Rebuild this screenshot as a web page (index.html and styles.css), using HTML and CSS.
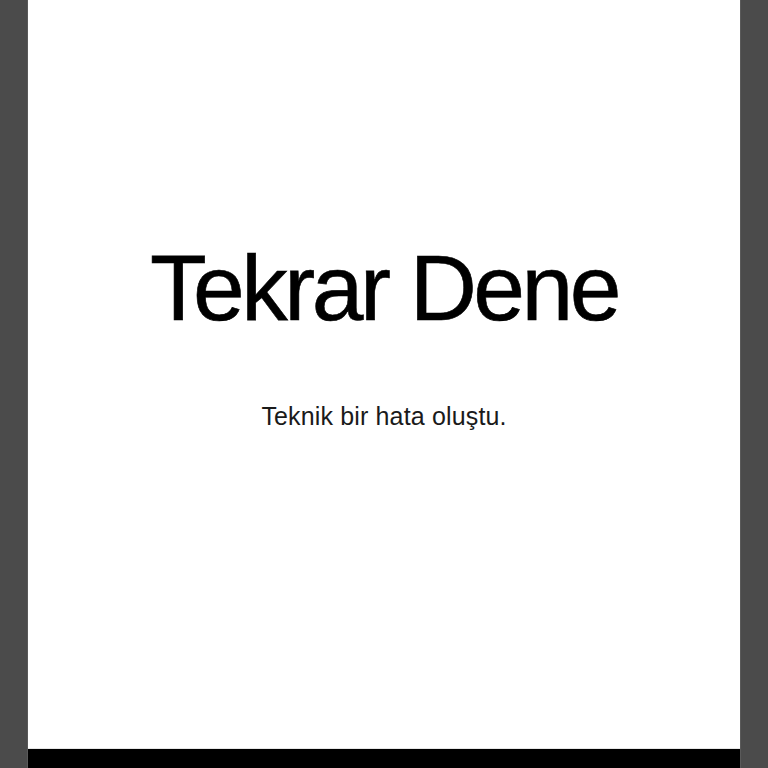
FILE: index.html
```html
<!DOCTYPE html>
<html lang="tr">
<head>
<meta charset="utf-8">
<link rel="stylesheet" href="styles.css">
</head>
<body>
<div class="frame">
  <div class="side side-left"></div>
  <div class="screen">
    <div class="content">
      <h1 class="title">Tekrar Dene</h1>
      <p class="message">Teknik bir hata oluştu.</p>
    </div>
    <div class="bottom-bar"></div>
  </div>
  <div class="side side-right"></div>
</div>
</body>
</html>
```
FILE: styles.css
```css
html, body {
  margin: 0;
  padding: 0;
  height: 100%;
}
body {
  font-family: "Liberation Sans", Arial, sans-serif;
  background: #4b4b4b;
}
.frame {
  display: flex;
  height: 768px;
  width: 768px;
}
.side {
  width: 28px;
  background: #4b4b4b;
}
.side-left {
  box-shadow: inset -1px 0 0 #5a5a5a;
}
.side-right {
  box-shadow: inset 1px 0 0 #5a5a5a;
}
.screen {
  flex: 1;
  display: flex;
  flex-direction: column;
}
.content {
  flex: 1;
  background: #ffffff;
  display: flex;
  flex-direction: column;
  align-items: center;
  padding-top: 238px;
  border-bottom: 1px solid #e6e6e6;
}
.title {
  margin: 0;
  font-weight: 400;
  font-size: 93px;
  letter-spacing: -3.5px;
  line-height: 100px;
  color: #000;
  -webkit-text-stroke: 0.6px #000;
}
.message {
  margin: 63px 0 0;
  font-size: 25px;
  line-height: 30px;
  letter-spacing: 0.15px;
  color: #1a1a1a;
}
.bottom-bar {
  height: 19px;
  background: #000;
}
```
